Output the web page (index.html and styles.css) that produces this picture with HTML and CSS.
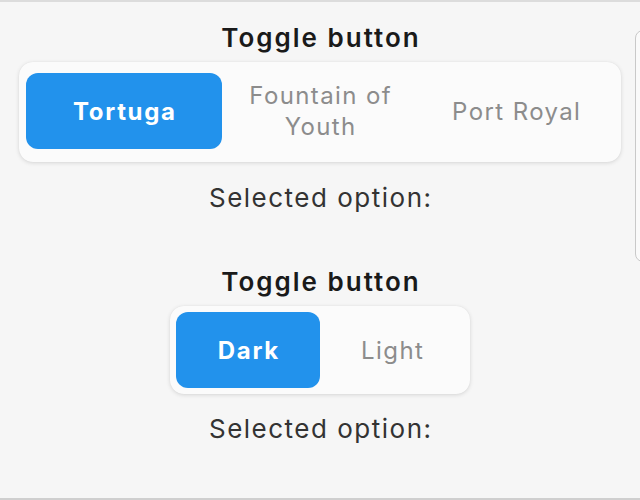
FILE: index.html
```html
<!DOCTYPE html>
<html>
<head>
<meta charset="utf-8">
<link rel="stylesheet" href="styles.css">
</head>
<body>
<div class="screen">
  <section class="demo demo-first">
    <h2 class="title">Toggle button</h2>
    <div class="group group-three">
      <button class="opt selected">Tortuga</button>
      <button class="opt">Fountain of<br>Youth</button>
      <button class="opt">Port Royal</button>
    </div>
    <p class="result">Selected option:</p>
  </section>
  <section class="demo demo-second">
    <h2 class="title">Toggle button</h2>
    <div class="group group-two">
      <button class="opt selected">Dark</button>
      <button class="opt">Light</button>
    </div>
    <p class="result">Selected option:</p>
  </section>
  <div class="peek"></div>
</div>
</body>
</html>
```
FILE: styles.css
```css
* { box-sizing: border-box; }
html, body {
  margin: 0;
  padding: 0;
  width: 640px;
  height: 500px;
  overflow: hidden;
  background: #f6f6f6;
}
.screen {
  position: relative;
  width: 640px;
  height: 500px;
  border-top: 2px solid #dcdcdc;
  border-bottom: 2px solid #cfcfcf;
  font-family: Inter, "Noto Sans", sans-serif;
  display: flex;
  flex-direction: column;
  align-items: center;
}
.demo {
  display: flex;
  flex-direction: column;
  align-items: center;
}
.demo-first { margin-top: 18px; }
.demo-second { margin-top: 48px; }
.title {
  margin: 0;
  padding-left: 2px;
  height: 36px;
  line-height: 36px;
  font-size: 26px;
  font-weight: 600;
  color: #1a1a1a;
  letter-spacing: 2px;
}
.group {
  margin-top: 6px;
  background: #fbfbfb;
  border-radius: 14px;
  box-shadow: 0 1px 4px rgba(0,0,0,0.13), 0 0 1px rgba(0,0,0,0.08);
  display: grid;
}
.group-three {
  width: 602px;
  height: 100px;
  padding: 11px 7px 13px;
  grid-template-columns: repeat(3, 1fr);
}
.group-two {
  width: 300px;
  height: 88px;
  padding: 6px;
  grid-template-columns: repeat(2, 1fr);
}
.opt {
  border: 0;
  margin: 0;
  padding: 0 0 0 1.4px;
  background: transparent;
  font-family: inherit;
  font-size: 24px;
  font-weight: 400;
  line-height: 31px;
  letter-spacing: 1.4px;
  color: #8c8c8c;
  border-radius: 12px;
  display: flex;
  align-items: center;
  justify-content: center;
  text-align: center;
}
.opt.selected {
  background: #2292ec;
  color: #ffffff;
  font-weight: 700;
  letter-spacing: 1.7px;
  padding-left: 1.7px;
}
.result {
  margin: 18px 0 0;
  padding-left: 1.5px;
  height: 36px;
  line-height: 36px;
  font-size: 26px;
  font-weight: 400;
  letter-spacing: 1.5px;
  color: #333333;
}
.demo-second .result { margin-top: 17px; }
.peek {
  position: absolute;
  left: 635px;
  top: 28px;
  width: 20px;
  height: 232px;
  border: 1px solid #c9c9c9;
  border-radius: 8px;
  background: #fafafa;
}
```
